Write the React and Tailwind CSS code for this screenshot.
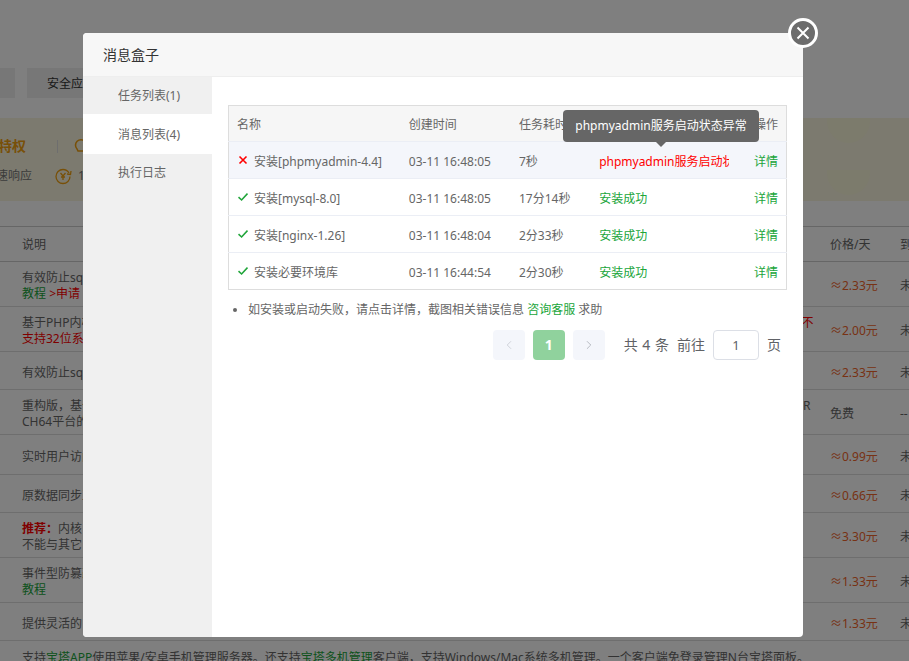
import React from 'react';
import { ChevronLeft, ChevronRight } from 'lucide-react';

const pageRows = [
  { h: 'h-[45px]', price: '≈2.33元', lines: [<>有效防止sql注入、xss攻击、一句话木马、防采集等常见渗透攻击 <span className="text-[#20a53a]">&gt;</span></>, <><span className="text-[#20a53a]">教程</span> <span className="text-[#f00]">&gt;申请</span></>] },
  { h: 'h-[45px]', price: '≈2.00元', lines: [<>基于PHP内核的防火墙，有效防护各类攻击<span className="ml-[552px] text-[#f00]">不</span></>, <span className="text-[#f00]">支持32位系统</span>] },
  { h: 'h-[38px]', price: '≈2.33元', lines: ['有效防止sql注入'] },
  { h: 'h-[45px]', price: '免费', free: true, lines: [<>重构版，基于<span className="ml-[709px]">R</span></>, 'CH64平台的'] },
  { h: 'h-[40px]', price: '≈0.99元', lines: ['实时用户访问'] },
  { h: 'h-[38px]', price: '≈0.66元', lines: ['原数据同步工具'] },
  { h: 'h-[45px]', price: '≈3.30元', lines: [<><span className="font-bold text-[#f00]">推荐：</span>内核</>, '不能与其它'] },
  { h: 'h-[45px]', price: '≈1.33元', lines: ['事件型防篡改', <span className="text-[#20a53a]">教程</span>] },
  { h: 'h-[38px]', price: '≈1.33元', lines: ['提供灵活的'] },
];

const tasks = [
  { name: '安装[phpmyadmin-4.4]', time: '03-11 16:48:05', cost: '7秒', fail: true, status: 'phpmyadmin服务启动状态异常' },
  { name: '安装[mysql-8.0]', time: '03-11 16:48:05', cost: '17分14秒', status: '安装成功' },
  { name: '安装[nginx-1.26]', time: '03-11 16:48:04', cost: '2分33秒', status: '安装成功' },
  { name: '安装必要环境库', time: '03-11 16:44:54', cost: '2分30秒', status: '安装成功' },
];

const Background = () => (
  <div className="w-[909px] bg-white text-xs text-[#666]">
    <div className="flex h-[118px] items-start gap-3 pt-[68px]">
      <div className="h-[30px] w-[15px] bg-[#eee]" />
      <div className="flex h-[30px] w-[120px] items-center bg-[#eee] pl-5 pt-px text-xs text-[#333]">安全应用</div>
    </div>
    <div className="relative h-[83px] overflow-hidden bg-[#f9f5df]">
      <div className="absolute left-[-30px] top-[18px] flex items-center text-sm font-bold text-[#f0a010]">
        <span className="whitespace-nowrap">软件特权</span>
        <span className="ml-[31px] h-[13px] w-px bg-[#ddd]" />
        <svg className="ml-[16px]" width="14" height="16" viewBox="0 0 14 16" fill="none" stroke="#f0a010" strokeWidth="1.6"><path d="M3 11a5.5 5.5 0 1 1 8 0l-1 2H4z" /></svg>
      </div>
      <div className="absolute left-[-16px] top-[49px] flex items-center text-xs text-[#777]">
        <span className="whitespace-nowrap">快速响应</span>
        <svg className="ml-[22px]" width="18" height="18" viewBox="0 0 18 18" fill="none" stroke="#f0a010" strokeWidth="1.3">
          <path d="M16 9.5A7 7 0 1 1 9 2.5a7 7 0 0 1 6 3.5" />
          <path d="M13 7l3.5.5L17 4" />
          <path d="M6.5 6 9 9l2.5-3M9 9v4M7 10h4" />
        </svg>
        <span className="ml-[6px]">1</span>
      </div>
      <div className="absolute left-[827px] top-0 h-[25px] w-[43px] rounded-b-full bg-[#f8f6d8]" />
      <div className="absolute left-[827px] top-[52px] h-[25px] w-[43px] rounded-b-full bg-[#f8f6d8]" />
    </div>
    <div className="h-[25px] bg-white" />
    <div className="flex h-[36px] items-center border-y border-y-[#ccc] bg-white pl-[22px] pt-[2px] whitespace-nowrap">
      <span className="w-[808px] shrink-0">说明</span>
      <span className="w-[70px] shrink-0">价格/天</span>
      <span>到期时间</span>
    </div>
    {pageRows.map((row, i) => (
      <div key={i} className={`flex ${row.h} items-center border-b border-b-[#ddd] pl-[22px] pt-1`}>
        <div className="w-[808px] shrink-0 whitespace-nowrap leading-4">
          {row.lines.map((line, j) => <div key={j}>{line}</div>)}
        </div>
        <span className={`w-[70px] shrink-0 text-xs ${row.free ? 'text-[#666]' : 'text-[#f0642a]'}`}>{row.price}</span>
        <span className="whitespace-nowrap text-xs">{row.free ? '--' : '未开通'}</span>
      </div>
    ))}
    <div className="flex h-[34px] items-center pl-[22px] whitespace-nowrap">
      支持<span className="text-[#20a53a]">宝塔APP</span>使用苹果/安卓手机管理服务器。还支持<span className="text-[#20a53a]">宝塔多机管理</span>客户端，支持Windows/Mac系统多机管理。一个客户端免登录管理N台宝塔面板。
    </div>
  </div>
);

const StatusIcon = ({ fail }) => fail ? (
  <svg width="10" height="10" viewBox="0 0 10 10" fill="none" stroke="#f00" strokeWidth="1.6"><path d="M1.5 1.5l7 7M8.5 1.5l-7 7" /></svg>
) : (
  <svg width="10" height="10" viewBox="0 0 10 10" fill="none" stroke="#20a53a" strokeWidth="1.6"><path d="M.5 5.2 3.6 8 9.5 1.6" /></svg>
);

const Modal = () => (
  <div className="absolute left-[83px] top-[33px] flex h-[604px] w-[720px] flex-col rounded bg-white">
    <div className="flex h-[44px] shrink-0 items-center rounded-t border-b border-b-[#eee] bg-[#f7f7f7] pl-5 text-sm text-[#333]">消息盒子</div>
    <div className="flex min-h-0 flex-1">
      <div className="w-[129px] shrink-0 rounded-bl bg-[#f0f0f0] text-xs text-[#666]">
        <div className="flex h-[37px] items-center pl-[35px]">任务列表(1)</div>
        <div className="flex h-[40px] items-center bg-white pl-[35px] pt-px">消息列表(4)</div>
        <div className="flex h-[38px] items-center pl-[35px]">执行日志</div>
      </div>
      <div className="flex-1 px-4 pt-[28px] text-xs text-[#666]">
        <table className="w-full table-fixed border border-[#ddd]">
          <colgroup>
            <col className="w-[172px]" />
            <col className="w-[110px]" />
            <col className="w-[80px]" />
            <col className="w-[146px]" />
            <col className="w-[49px]" />
          </colgroup>
          <thead>
            <tr className="h-[36px] border-b border-b-[#ebeef5] bg-[#f6f6f6] text-left">
              <th className="pl-2 pt-[3px] font-normal">名称</th>
              <th className="pl-2 pt-[3px] font-normal">创建时间</th>
              <th className="pl-2 pt-[3px] font-normal">任务耗时</th>
              <th className="pl-2 pt-[3px] font-normal">执行结果</th>
              <th className="pr-2 pt-[3px] text-right font-normal">操作</th>
            </tr>
          </thead>
          <tbody>
            {tasks.map((t, i) => (
              <tr key={i} className={`h-[37px] border-b border-b-[#ebeef5] last:border-b-0 ${t.fail ? 'bg-[#f4f6fb]' : ''}`}>
                <td className="pl-[9px] pt-[4px]">
                  <div className="flex items-center gap-[6px] whitespace-nowrap"><span className="-mt-[5px]"><StatusIcon fail={t.fail} /></span>{t.name}</div>
                </td>
                <td className="pl-2 pt-[4px] whitespace-nowrap">{t.time}</td>
                <td className="pl-2 pt-[4px] whitespace-nowrap">{t.cost}</td>
                <td className={`px-2 pt-[4px] ${t.fail ? 'text-[#f00]' : 'text-[#20a53a]'}`}>
                  <div className="overflow-hidden whitespace-nowrap">{t.status}</div>
                </td>
                <td className="pr-2 pt-[4px] text-right text-[#20a53a]">详情</td>
              </tr>
            ))}
          </tbody>
        </table>
        <ul className="mt-[12px] list-disc pl-5 leading-[16px]">
          <li>如安装或启动失败，请点击详情，截图相关错误信息 <a className="text-[#20a53a]">咨询客服</a> 求助</li>
        </ul>
        <div className="mt-[12px] flex items-center justify-end pr-[6px] text-sm text-[#606266]">
          <button className="flex h-[30px] w-[32px] items-center justify-center rounded-sm bg-[#f4f6fb] text-[#c0c4cc]"><ChevronLeft className="h-[14px] w-[14px]" strokeWidth={1.25} /></button>
          <button className="ml-2 flex h-[30px] w-[32px] items-center justify-center rounded-sm bg-[#90d29d] font-bold text-white">1</button>
          <button className="ml-2 flex h-[30px] w-[32px] items-center justify-center rounded-sm bg-[#f4f6fb] text-[#a0a4ac]"><ChevronRight className="h-[14px] w-[14px]" strokeWidth={1.25} /></button>
          <span className="ml-[19px] [word-spacing:1px]">共 4 条</span>
          <span className="ml-2">前往</span>
          <div className="ml-2 flex h-[30px] w-[46px] items-center justify-center rounded border border-[#dcdfe6] text-[13px]">1</div>
          <span className="ml-2">页</span>
        </div>
      </div>
    </div>
    <div className="absolute left-[480px] top-[77px] flex h-[32px] w-[196px] items-center justify-center rounded bg-[#666] text-xs whitespace-nowrap text-white">
      phpmyadmin服务启动状态异常
      <span className="absolute left-[93px] top-[32px] border-x-[5px] border-t-[5px] border-x-transparent border-t-[#666]" />
    </div>
    <button className="absolute left-[705px] top-[-15px] flex h-[30px] w-[30px] items-center justify-center rounded-full border-[3px] border-white bg-[#6c6c6c]">
      <svg width="14" height="14" viewBox="0 0 14 14" fill="none" stroke="#fff" strokeWidth="2"><path d="M1.5 1.5l11 11M12.5 1.5l-11 11" /></svg>
    </button>
  </div>
);

export default function App() {
  return (
    <div className="relative h-screen w-full overflow-hidden [font-family:'Noto_Sans','Noto_Sans_CJK_SC',sans-serif]">
      <Background />
      <div className="absolute inset-0 bg-black/50" />
      <Modal />
    </div>
  );
}
